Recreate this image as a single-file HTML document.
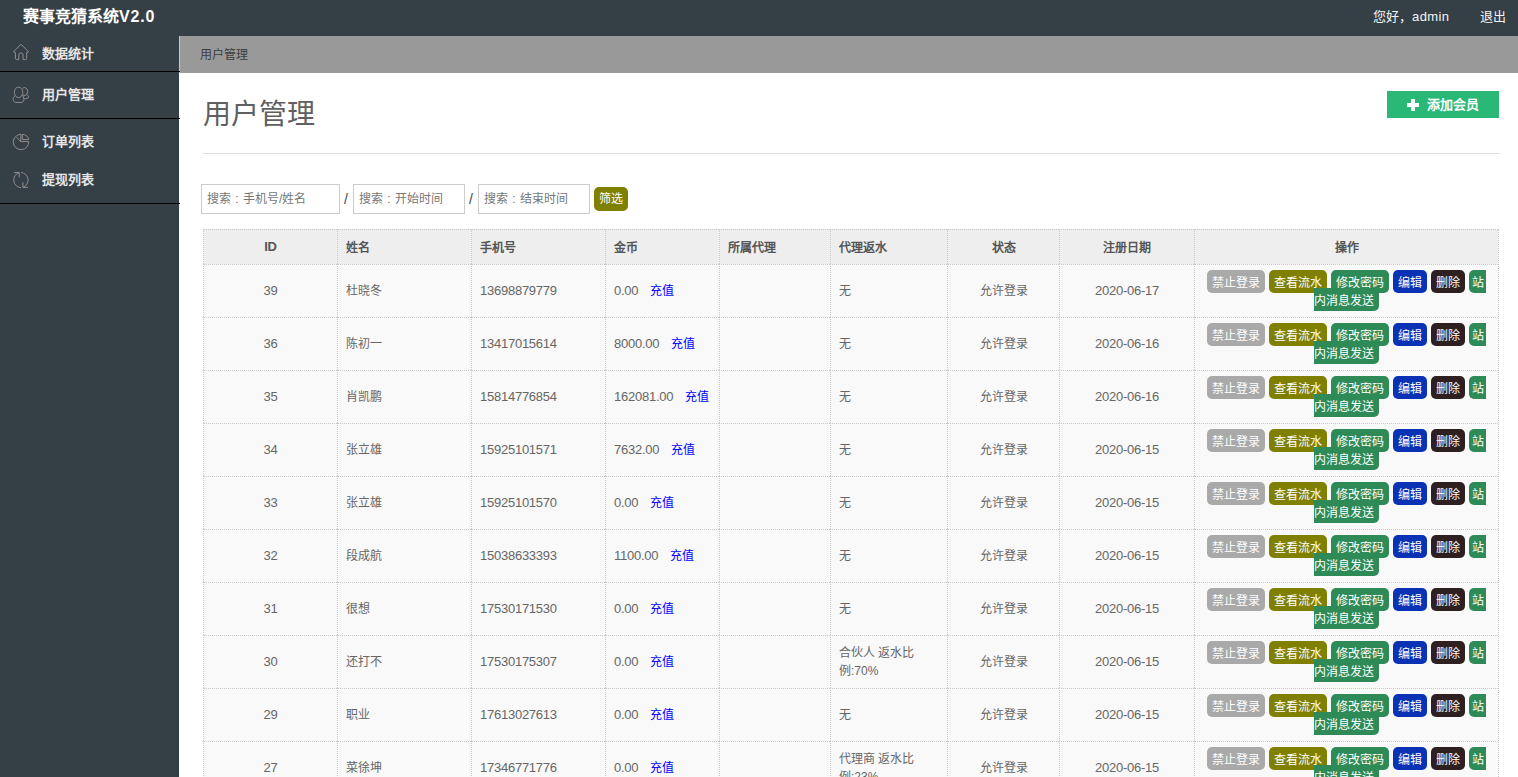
<!DOCTYPE html>
<html lang="zh-CN">
<head>
<meta charset="utf-8">
<title>用户管理</title>
<style>
*{box-sizing:border-box;}
html,body{margin:0;padding:0;overflow:hidden;}
body{width:1518px;height:777px;overflow:hidden;background:#fff;font-family:"Liberation Sans",sans-serif;font-size:13px;color:#666;position:relative;}
a{text-decoration:none;}
#top{position:absolute;left:0;top:0;width:1518px;height:36px;background:#353f46;color:#fff;}
#top .logo{position:absolute;left:23px;top:0;height:34px;line-height:34px;font-size:16px;font-weight:bold;color:#fff;white-space:nowrap;}
#top .hello{position:absolute;left:1373px;top:0;line-height:33px;font-size:13px;color:#f4f4f4;white-space:nowrap;}
#top .exit{position:absolute;left:1480px;top:0;line-height:33px;font-size:13px;color:#f4f4f4;white-space:nowrap;}
#side{position:absolute;left:0;top:36px;width:179px;height:741px;background:#353f46;z-index:2;}
#side .it{position:absolute;left:42px;font-size:13px;font-weight:bold;color:#e6e6e6;line-height:16px;white-space:nowrap;}
#side svg{position:absolute;left:12px;width:18px;height:18px;overflow:visible;}
#side .ln{position:absolute;left:0;width:180px;height:1px;background:#000;}
#crumb{position:absolute;left:179px;top:36px;width:1339px;height:37px;background:#999;border-left:1px solid #c8c8c8;}
#crumb span{position:absolute;left:20px;top:0;line-height:39px;font-size:12px;color:#3c3c3c;white-space:nowrap;}
h1{position:absolute;left:203px;top:97px;margin:0;font-size:28px;line-height:36px;font-weight:300;color:#606060;white-space:nowrap;}
#add{position:absolute;left:1387px;top:91px;width:112px;height:27px;background:#2ab877;color:#fff;font-size:13px;font-weight:bold;line-height:27px;}
#add span{position:absolute;left:40px;top:0;white-space:nowrap;}
#add i{position:absolute;background:#fff;}
#hr{position:absolute;left:203px;top:153px;width:1296px;height:1px;background:#ddd;}
.inp{position:absolute;top:184px;height:30px;border:1px solid #ccc;background:#fff;font-size:12px;color:#777;line-height:28px;padding-left:5px;white-space:nowrap;overflow:hidden;}
.co{display:inline-block;width:12px;text-align:center;font-weight:normal;}
.sl{position:absolute;top:184px;line-height:30px;font-size:14px;color:#444;}
#flt{position:absolute;left:594px;top:187px;width:34px;height:24px;background:#808000;color:#fff;border-radius:5px;font-size:12px;line-height:24px;text-align:center;white-space:nowrap;}
table{position:absolute;left:203px;top:229px;width:1296px;border-collapse:separate;border-spacing:0;table-layout:fixed;font-size:13px;color:#666;border-right:1px dotted #c8c8c8;border-bottom:1px dotted #c8c8c8;}
th,td{border-left:1px dotted #c8c8c8;border-top:1px dotted #c8c8c8;padding:0 8px 0 8px;text-align:left;vertical-align:middle;white-space:nowrap;overflow:hidden;}
th{height:35px;background:#eee;font-weight:bold;color:#555;font-size:12px;padding-bottom:1px;}
th.n{font-size:13px;}
.n{font-size:13px;letter-spacing:-0.25px;}
td{height:53px;background:#f9f9f9;line-height:18px;font-size:12px;}
td.w{white-space:normal;}
.c{text-align:center;}
td a.cz{color:#0000ff;margin-left:12px;}
td.op{padding:0;}
td.op div{position:relative;left:-1px;top:-1px;width:303px;height:52px;}
.b{position:absolute;top:6px;height:23px;line-height:26px;color:#fff;border-radius:5px;font-size:12px;text-align:center;white-space:nowrap;overflow:hidden;}
.g{background:#a9a9a9;}.o{background:#808000;}.gr{background:#2e8b57;}.bl{background:#0a32b4;}.dk{background:#2e2020;}
</style>
</head>
<body>
<div id="top"><div class="logo">赛事竞猜系统<span style="letter-spacing:0.8px">V2.0</span></div><div class="hello">您好，<span style="letter-spacing:0.4px">admin</span></div><div class="exit">退出</div></div>
<div id="side">
  <svg style="top:7px" viewBox="0 0 18 18" fill="none" stroke="#8e8e8e" stroke-width="1" stroke-linejoin="round"><path d="M9 1.3 L1.4 8.9 L3.4 9.4 L3.4 15.4 Q3.4 16.6 4.6 16.6 L6.8 16.6 L6.8 12 A2.15 2.15 0 0 1 11.1 12 L11.1 16.6 L13.6 16.6 Q14.7 16.6 14.7 15.4 L14.7 9.4 L16.7 8.9 Z"/></svg>
  <div class="it" style="top:10px">数据统计</div>
  <div class="ln" style="top:35px"></div>
  <svg style="top:50px" viewBox="0 0 18 18" fill="none" stroke="#8e8e8e" stroke-width="1"><ellipse cx="6.55" cy="6.35" rx="4.25" ry="5.25"/><path d="M3 10.1 C1.6 11 1.1 12.3 1.2 13.4 C1.4 15.2 2.4 16.4 3.6 16.4 L9.8 16.4 C11.2 16.4 12 14.6 11.9 13 C11.8 11.4 11.2 10.3 10.4 9.4"/><path d="M10.6 2.2 A3.2 4 0 1 1 10.9 9"/><path d="M14.7 9 C16 9.4 16.8 10.2 16.7 11 C16.5 12.4 14 12.8 12.2 12.7"/></svg>
  <div class="it" style="top:51px">用户管理</div>
  <div class="ln" style="top:82px"></div>
  <svg style="top:97px" viewBox="0 0 18 18" fill="none" stroke="#8e8e8e" stroke-width="1"><path d="M9 1.3 A7.7 7.7 0 1 0 16.7 8.6 L8.6 8.6 L9 1.3 Z"/><path d="M8.6 8.6 L4.3 3.8"/><path d="M10.3 1.4 L10.3 6.6 L16.6 6.6 A6.3 5.4 0 0 0 10.3 1.4 Z"/></svg>
  <div class="it" style="top:98px">订单列表</div>
  <svg style="top:135px" viewBox="0 0 18 18" fill="none" stroke="#8e8e8e" stroke-width="1"><path d="M9 16.6 A7.6 7.6 0 0 1 7.2 1.7"/><path d="M2 1.5 L7.2 1.5 L7.2 6.5"/><path d="M9 1.5 A7.6 7.6 0 0 1 10.9 16.3"/><path d="M15.9 16.4 L10.9 16.4 L10.9 11.2"/></svg>
  <div class="it" style="top:136px">提现列表</div>
  <div class="ln" style="top:167px"></div>
</div>
<div id="crumb"><span>用户管理</span></div>
<h1>用户管理</h1>
<div id="add"><i style="left:20px;top:12px;width:12px;height:4px"></i><i style="left:24px;top:8px;width:4px;height:12px"></i><span>添加会员</span></div>
<div id="hr"></div>
<div class="inp" style="left:201px;width:139px">搜索<b class="co">:</b>手机号/姓名</div>
<div class="sl" style="left:344px">/</div>
<div class="inp" style="left:353px;width:112px">搜索<b class="co">:</b>开始时间</div>
<div class="sl" style="left:469px">/</div>
<div class="inp" style="left:478px;width:112px">搜索<b class="co">:</b>结束时间</div>
<div id="flt">筛选</div>
<table id="tb">
<colgroup><col style="width:134px"><col style="width:134px"><col style="width:134px"><col style="width:114px"><col style="width:111px"><col style="width:117px"><col style="width:112px"><col style="width:135px"><col style="width:304px"></colgroup>
<tr><th class="c n">ID</th><th>姓名</th><th>手机号</th><th>金币</th><th>所属代理</th><th>代理返水</th><th class="c">状态</th><th class="c">注册日期</th><th class="c">操作</th></tr>
<tr><td class="c n">39</td><td>杜晓冬</td><td class="n">13698879779</td><td><span class="n">0.00</span><a class="cz">充值</a></td><td></td><td>无</td><td class="c">允许登录</td><td class="c n">2020-06-17</td><td class="op"><div><a class="b gr" style="left:275px;width:17px;border-radius:5px 0 0 5px">站</a><a class="b g" style="left:13px;width:58px">禁止登录</a><a class="b o" style="left:75px;width:58px">查看流水</a><a class="b gr" style="left:137px;width:58px">修改密码</a><a class="b bl" style="left:199px;width:34px">编辑</a><a class="b dk" style="left:237px;width:34px">删除</a><a class="b gr" style="left:120px;top:24px;width:65px;border-radius:0 5px 5px 0;text-align:left">内消息发送</a></div></td></tr>
<tr><td class="c n">36</td><td>陈初一</td><td class="n">13417015614</td><td><span class="n">8000.00</span><a class="cz">充值</a></td><td></td><td>无</td><td class="c">允许登录</td><td class="c n">2020-06-16</td><td class="op"><div><a class="b gr" style="left:275px;width:17px;border-radius:5px 0 0 5px">站</a><a class="b g" style="left:13px;width:58px">禁止登录</a><a class="b o" style="left:75px;width:58px">查看流水</a><a class="b gr" style="left:137px;width:58px">修改密码</a><a class="b bl" style="left:199px;width:34px">编辑</a><a class="b dk" style="left:237px;width:34px">删除</a><a class="b gr" style="left:120px;top:24px;width:65px;border-radius:0 5px 5px 0;text-align:left">内消息发送</a></div></td></tr>
<tr><td class="c n">35</td><td>肖凯鹏</td><td class="n">15814776854</td><td><span class="n">162081.00</span><a class="cz">充值</a></td><td></td><td>无</td><td class="c">允许登录</td><td class="c n">2020-06-16</td><td class="op"><div><a class="b gr" style="left:275px;width:17px;border-radius:5px 0 0 5px">站</a><a class="b g" style="left:13px;width:58px">禁止登录</a><a class="b o" style="left:75px;width:58px">查看流水</a><a class="b gr" style="left:137px;width:58px">修改密码</a><a class="b bl" style="left:199px;width:34px">编辑</a><a class="b dk" style="left:237px;width:34px">删除</a><a class="b gr" style="left:120px;top:24px;width:65px;border-radius:0 5px 5px 0;text-align:left">内消息发送</a></div></td></tr>
<tr><td class="c n">34</td><td>张立雄</td><td class="n">15925101571</td><td><span class="n">7632.00</span><a class="cz">充值</a></td><td></td><td>无</td><td class="c">允许登录</td><td class="c n">2020-06-15</td><td class="op"><div><a class="b gr" style="left:275px;width:17px;border-radius:5px 0 0 5px">站</a><a class="b g" style="left:13px;width:58px">禁止登录</a><a class="b o" style="left:75px;width:58px">查看流水</a><a class="b gr" style="left:137px;width:58px">修改密码</a><a class="b bl" style="left:199px;width:34px">编辑</a><a class="b dk" style="left:237px;width:34px">删除</a><a class="b gr" style="left:120px;top:24px;width:65px;border-radius:0 5px 5px 0;text-align:left">内消息发送</a></div></td></tr>
<tr><td class="c n">33</td><td>张立雄</td><td class="n">15925101570</td><td><span class="n">0.00</span><a class="cz">充值</a></td><td></td><td>无</td><td class="c">允许登录</td><td class="c n">2020-06-15</td><td class="op"><div><a class="b gr" style="left:275px;width:17px;border-radius:5px 0 0 5px">站</a><a class="b g" style="left:13px;width:58px">禁止登录</a><a class="b o" style="left:75px;width:58px">查看流水</a><a class="b gr" style="left:137px;width:58px">修改密码</a><a class="b bl" style="left:199px;width:34px">编辑</a><a class="b dk" style="left:237px;width:34px">删除</a><a class="b gr" style="left:120px;top:24px;width:65px;border-radius:0 5px 5px 0;text-align:left">内消息发送</a></div></td></tr>
<tr><td class="c n">32</td><td>段成航</td><td class="n">15038633393</td><td><span class="n">1100.00</span><a class="cz">充值</a></td><td></td><td>无</td><td class="c">允许登录</td><td class="c n">2020-06-15</td><td class="op"><div><a class="b gr" style="left:275px;width:17px;border-radius:5px 0 0 5px">站</a><a class="b g" style="left:13px;width:58px">禁止登录</a><a class="b o" style="left:75px;width:58px">查看流水</a><a class="b gr" style="left:137px;width:58px">修改密码</a><a class="b bl" style="left:199px;width:34px">编辑</a><a class="b dk" style="left:237px;width:34px">删除</a><a class="b gr" style="left:120px;top:24px;width:65px;border-radius:0 5px 5px 0;text-align:left">内消息发送</a></div></td></tr>
<tr><td class="c n">31</td><td>很想</td><td class="n">17530171530</td><td><span class="n">0.00</span><a class="cz">充值</a></td><td></td><td>无</td><td class="c">允许登录</td><td class="c n">2020-06-15</td><td class="op"><div><a class="b gr" style="left:275px;width:17px;border-radius:5px 0 0 5px">站</a><a class="b g" style="left:13px;width:58px">禁止登录</a><a class="b o" style="left:75px;width:58px">查看流水</a><a class="b gr" style="left:137px;width:58px">修改密码</a><a class="b bl" style="left:199px;width:34px">编辑</a><a class="b dk" style="left:237px;width:34px">删除</a><a class="b gr" style="left:120px;top:24px;width:65px;border-radius:0 5px 5px 0;text-align:left">内消息发送</a></div></td></tr>
<tr><td class="c n">30</td><td>还打不</td><td class="n">17530175307</td><td><span class="n">0.00</span><a class="cz">充值</a></td><td></td><td>合伙人 返水比<br>例:70%</td><td class="c">允许登录</td><td class="c n">2020-06-15</td><td class="op"><div><a class="b gr" style="left:275px;width:17px;border-radius:5px 0 0 5px">站</a><a class="b g" style="left:13px;width:58px">禁止登录</a><a class="b o" style="left:75px;width:58px">查看流水</a><a class="b gr" style="left:137px;width:58px">修改密码</a><a class="b bl" style="left:199px;width:34px">编辑</a><a class="b dk" style="left:237px;width:34px">删除</a><a class="b gr" style="left:120px;top:24px;width:65px;border-radius:0 5px 5px 0;text-align:left">内消息发送</a></div></td></tr>
<tr><td class="c n">29</td><td>职业</td><td class="n">17613027613</td><td><span class="n">0.00</span><a class="cz">充值</a></td><td></td><td>无</td><td class="c">允许登录</td><td class="c n">2020-06-15</td><td class="op"><div><a class="b gr" style="left:275px;width:17px;border-radius:5px 0 0 5px">站</a><a class="b g" style="left:13px;width:58px">禁止登录</a><a class="b o" style="left:75px;width:58px">查看流水</a><a class="b gr" style="left:137px;width:58px">修改密码</a><a class="b bl" style="left:199px;width:34px">编辑</a><a class="b dk" style="left:237px;width:34px">删除</a><a class="b gr" style="left:120px;top:24px;width:65px;border-radius:0 5px 5px 0;text-align:left">内消息发送</a></div></td></tr>
<tr><td class="c n">27</td><td>菜徐坤</td><td class="n">17346771776</td><td><span class="n">0.00</span><a class="cz">充值</a></td><td></td><td>代理商 返水比<br>例:23%</td><td class="c">允许登录</td><td class="c n">2020-06-15</td><td class="op"><div><a class="b gr" style="left:275px;width:17px;border-radius:5px 0 0 5px">站</a><a class="b g" style="left:13px;width:58px">禁止登录</a><a class="b o" style="left:75px;width:58px">查看流水</a><a class="b gr" style="left:137px;width:58px">修改密码</a><a class="b bl" style="left:199px;width:34px">编辑</a><a class="b dk" style="left:237px;width:34px">删除</a><a class="b gr" style="left:120px;top:24px;width:65px;border-radius:0 5px 5px 0;text-align:left">内消息发送</a></div></td></tr>
</table>
</body>
</html>
